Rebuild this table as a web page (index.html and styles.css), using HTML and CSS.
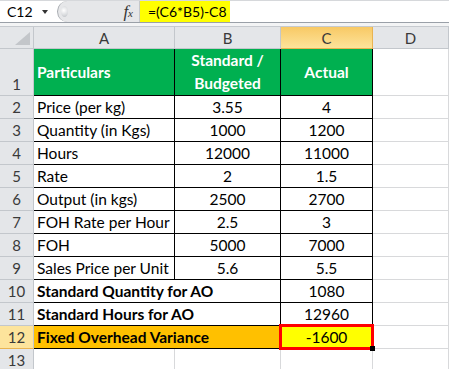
FILE: index.html
```html
<!DOCTYPE html>
<html>
<head>
<meta charset="utf-8">
<link rel="stylesheet" href="styles.css">
</head>
<body>
<div class="fbar">
  <div class="namebox"><span class="ref">C12</span><span class="dd"></span></div>
  <div class="fmid"><span class="knob"></span><span class="fx">f<sub>x</sub></span></div>
  <div class="formula"><span class="ftext">=(C6*B5)-C8</span></div>
</div>
<div class="strip"></div>
<div class="sheet">
  <div class="corner"><span class="tri"></span></div>
  <div class="ch">A</div>
  <div class="ch">B</div>
  <div class="ch ch-sel">C</div>
  <div class="ch">D</div>

  <div class="rh rh-bottom">1</div>
  <div class="c t tr green">Particulars</div>
  <div class="c t tr green center two">Standard /<br>Budgeted</div>
  <div class="c t tr green center">Actual</div>
  <div class="c"></div>

  <div class="rh">2</div>
  <div class="c t tr">Price (per kg)</div>
  <div class="c t tr center">3.55</div>
  <div class="c t tr center">4</div>
  <div class="c"></div>

  <div class="rh">3</div>
  <div class="c t tr">Quantity (in Kgs)</div>
  <div class="c t tr center">1000</div>
  <div class="c t tr center">1200</div>
  <div class="c"></div>

  <div class="rh">4</div>
  <div class="c t tr">Hours</div>
  <div class="c t tr center">12000</div>
  <div class="c t tr center">11000</div>
  <div class="c"></div>

  <div class="rh">5</div>
  <div class="c t tr">Rate</div>
  <div class="c t tr center">2</div>
  <div class="c t tr center">1.5</div>
  <div class="c"></div>

  <div class="rh">6</div>
  <div class="c t tr">Output (in kgs)</div>
  <div class="c t tr center">2500</div>
  <div class="c t tr center">2700</div>
  <div class="c"></div>

  <div class="rh">7</div>
  <div class="c t tr">FOH Rate per Hour</div>
  <div class="c t tr center">2.5</div>
  <div class="c t tr center">3</div>
  <div class="c"></div>

  <div class="rh">8</div>
  <div class="c t tr">FOH</div>
  <div class="c t tr center">5000</div>
  <div class="c t tr center">7000</div>
  <div class="c"></div>

  <div class="rh">9</div>
  <div class="c t tr">Sales Price per Unit</div>
  <div class="c t tr center">5.6</div>
  <div class="c t tr center">5.5</div>
  <div class="c"></div>

  <div class="rh">10</div>
  <div class="c t tr span2 bold">Standard Quantity for AO</div>
  <div class="c t tr center">1080</div>
  <div class="c"></div>

  <div class="rh">11</div>
  <div class="c t tr span2 bold">Standard Hours for AO</div>
  <div class="c t tr center">12960</div>
  <div class="c"></div>

  <div class="rh rh-sel">12</div>
  <div class="c t tr span2 bold orange">Fixed Overhead Variance</div>
  <div class="c t tr center yellow sel">-1600</div>
  <div class="c"></div>

  <div class="rh">13</div>
  <div class="c"></div>
  <div class="c"></div>
  <div class="c"></div>
  <div class="c"></div>
</div>
</body>
</html>
```

FILE: styles.css
```css
* { box-sizing: border-box; }

html, body {
  margin: 0;
  padding: 0;
  background: #fff;
}

body {
  width: 449px;
  height: 369px;
  overflow: hidden;
  font-family: Lato, "Liberation Sans", sans-serif;
  color: #000;
}

/* formula bar */
.fbar {
  display: flex;
  height: 23px;
  border-top: 1px solid #d6d8db;
  border-bottom: 1px solid #9aa0a8;
  background: #fff;
}

.namebox {
  width: 57px;
  display: flex;
  align-items: center;
  padding-left: 7px;
  font-size: 14px;
}

.dd {
  margin-left: auto;
  margin-right: 9px;
  width: 0;
  height: 0;
  border-left: 3.5px solid transparent;
  border-right: 3.5px solid transparent;
  border-top: 4px solid #333;
}

.fmid {
  width: 82px;
  display: flex;
  align-items: center;
  background: #e6e7e9;
  border-left: 1px solid #a7abb0;
  border-radius: 11px 0 0 11px;
}

.knob {
  width: 7px;
  height: 11px;
  margin-left: 3px;
  border-radius: 50%;
  background: radial-gradient(circle at 40% 40%, #ffffff 0%, #d9dbde 60%, #b9bdc2 100%);
}

.fx {
  margin-left: auto;
  margin-right: 6px;
  font-family: "Liberation Serif", serif;
  font-style: italic;
  font-size: 17px;
  color: #333;
  line-height: 1;
}

.fx sub {
  font-size: 11px;
  vertical-align: 0;
  font-style: italic;
}

.formula {
  flex: 1;
  display: flex;
  border-left: 1px solid #c4c7cb;
}

.ftext {
  width: 90px;
  background: #ffff00;
  display: flex;
  align-items: center;
  padding-left: 8px;
  font-size: 14px;
  white-space: nowrap;
}

.strip {
  height: 4px;
  background: #f3f4f5;
  border-bottom: 1px solid #c6cacf;
}

/* sheet grid */
.sheet {
  display: grid;
  grid-template-columns: 34px 141px 106px 92px 76px;
  grid-template-rows: 22px 47px repeat(12, 23px);
}

.corner {
  background: #e4e6e9;
  border-right: 1px solid #c3c7cc;
  border-bottom: 1px solid #c3c7cc;
  display: flex;
  align-items: flex-end;
  justify-content: flex-end;
  padding: 0 3px 3px 0;
}

.tri {
  width: 0;
  height: 0;
  border-left: 15px solid transparent;
  border-bottom: 13px solid #c3c6ca;
}

.ch {
  background: #e4e6e9;
  border-right: 1px solid #c3c7cc;
  border-bottom: 1px solid #c3c7cc;
  display: flex;
  align-items: center;
  justify-content: center;
  font-size: 15px;
  color: #3a3a3a;
}

.ch-sel {
  background: linear-gradient(#f8c965, #fde39a);
  border-right-color: #e9b451;
  border-bottom-color: #e9b451;
}

.rh {
  background: #e4e6e9;
  border-right: 1px solid #c3c7cc;
  border-bottom: 1px solid #c3c7cc;
  display: flex;
  align-items: center;
  justify-content: center;
  font-size: 15px;
  color: #3a3a3a;
}

.rh-bottom {
  align-items: flex-end;
  padding-bottom: 2px;
}

.rh-sel {
  background: #fde49c;
  border-bottom-color: #e9b451;
}

.c {
  border-right: 1px solid #d8d9db;
  border-bottom: 1px solid #d8d9db;
  display: flex;
  align-items: center;
  padding: 0 3px;
  font-size: 15.5px;
  line-height: 22px;
  white-space: nowrap;
}

.t { border-right-color: #000; }
.tr { border-bottom-color: #000; }

.center { justify-content: center; text-align: center; }

.span2 { grid-column: span 2; }

.bold { font-weight: 700; }

.green {
  background: #00b050;
  color: #fff;
  font-weight: 700;
}

.two { line-height: 23px; }

.orange { background: #ffc000; }

.yellow { background: #ffff00; }

.sel { position: relative; }

.sel::before {
  content: "";
  position: absolute;
  left: -2px;
  top: -2px;
  right: -2px;
  bottom: -2px;
  border: 3px solid #ff0000;
}

.sel::after {
  content: "";
  position: absolute;
  right: -3px;
  bottom: -3px;
  width: 5px;
  height: 5px;
  background: #000;
}
```
